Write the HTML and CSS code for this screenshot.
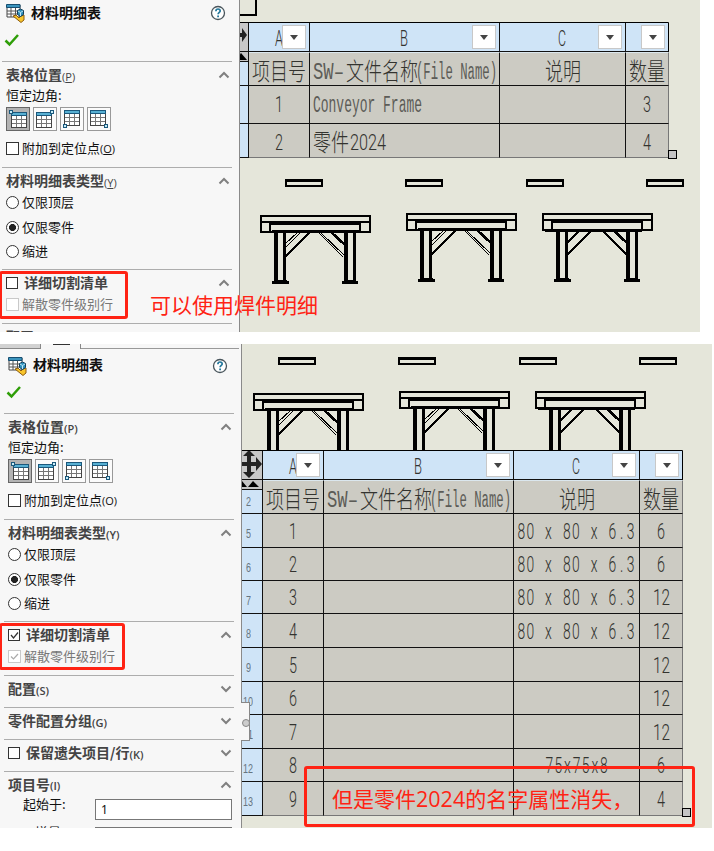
FILE: index.html
```html
<!DOCTYPE html>
<html lang="zh-CN">
<head>
<meta charset="utf-8">
<title>材料明细表</title>
<link rel="stylesheet" href="styles.css">
</head>
<body>
<svg class="defs" width="0" height="0">
  <symbol id="bom" viewBox="0 0 20 20">
    <path d="M1 2h13v12H1z" fill="#fff" stroke="#444"/><path d="M0.5 1.500h13.500v3H.5z" fill="#3b94bd" stroke="#174e70"/>
    <path d="M5 5v9M9.500 5v9M1 8h13M1 11h13" stroke="#555" fill="none"/>
    <path d="M7 13l3-1 3 3 2-2 3-1v5l-3 2.500z" fill="#f8c52c" stroke="#8c5b10"/>
    <path d="M11.500 7.500l3-1.500 3 1.500v4l-3 2-3-2z" fill="#2f91bd" stroke="#123f5a"/><path d="M12 8l2.500 1.500 2.500-1.500M14.500 9.500v3.500" stroke="#bfe6f5" fill="none"/>
  </symbol>
  <symbol id="help" viewBox="0 0 16 16"><circle cx="8" cy="8" r="6.500" fill="#fff" stroke="#49555c" stroke-width="1.300"/><path d="M5.900 6.200c0-3 4.300-2.800 4.300-.3 0 1.500-2.100 1.500-2.100 3.400" fill="none" stroke="#24789c" stroke-width="1.700"/><path d="M7.200 10.600h1.800v1.700H7.200z" fill="#24789c"/></symbol>
  <symbol id="ok" viewBox="0 0 16 14"><path d="M1.500 7.500l4 4L14 2" fill="none" stroke="#2f9e08" stroke-width="2.500"/></symbol>
  <symbol id="up" viewBox="0 0 12 8"><path d="M1.500 6.500L6 2l4.500 4.500" fill="none" stroke="#808080" stroke-width="2"/></symbol>
  <symbol id="down" viewBox="0 0 12 8"><path d="M1.500 1.500L6 6l4.500-4.500" fill="none" stroke="#808080" stroke-width="2"/></symbol>
  <symbol id="grid" viewBox="0 0 16 16"><path d="M.5.500h15v15H.5z" fill="#fff" stroke="#444"/><path d="M.5.500h15v3H.5z" fill="#58b0d3" stroke="#1b587c"/><path d="M5.500 4v11M10.500 4v11M1 7.500h14M1 11.500h14" stroke="#777" fill="none"/></symbol>
  <symbol id="pin" viewBox="0 0 4 4"><path d="M.5.500h3v3h-3z" fill="#c5ecf8" stroke="#1b587c"/></symbol>
  <symbol id="bar" viewBox="0 0 40 10"><path d="M2 2v6h36V2z" fill="none" stroke="#000" stroke-width="2"/><path d="M2 2.500h36" stroke="#000" stroke-width="3"/></symbol>
  <symbol id="bench" viewBox="0 0 112 72">
    <g fill="none" stroke="#000" stroke-width="2">
      <path d="M1 1h109v16H1zM1 7h109M10 8v9M100 8v9"/><path d="M10 8h91" stroke-width="4"/><path d="M12 16.500h88" stroke-width="3"/>
      <path d="M16 18v47M86 18v47" stroke-width="4"/><path d="M24.500 18v47M94.500 18v47" stroke-width="3"/>
      <path d="M12 67h17M82 67h16" stroke-width="3"/><path d="M14 65.500h13M84 65.500h12" stroke-width="2"/>
      <path d="M25 42L50 17M71 17l14 13" stroke-width="2.500"/><path d="M25 29l13-12M26 32l14-14M60 17l25 24M58 17l25 25" stroke-width="1"/>
    </g>
  </symbol>
  <symbol id="bench-b" viewBox="0 0 112 72">
    <g fill="none" stroke="#000" stroke-width="2">
      <path d="M1 1h109v16H1zM1 7h109M10 8v9M100 8v9"/><path d="M10 8h91" stroke-width="4"/><path d="M3 17h97" stroke-width="3"/>
      <path d="M16 18v47M86 18v47" stroke-width="4"/><path d="M24.500 18v47M94.500 18v47" stroke-width="3"/>
      <path d="M12 67h17M82 67h16" stroke-width="3"/><path d="M14 65.500h13M84 65.500h12"/>
      <path d="M25 42L50 17M25 30l13-13M60 17l25 25M71 17l14 13" stroke-width="2.500"/>
    </g>
  </symbol>
</svg>

<section class="shot first">
  <aside class="panel">
    <div class="title"><svg class="bom"><use href="#bom"/></svg><b>材料明细表</b><svg class="help"><use href="#help"/></svg></div>
    <div class="confirm"><svg class="ok"><use href="#ok"/></svg></div>
    <div class="group location">
      <div class="head"><b>表格位置</b><small>(<u>P</u>)</small><svg class="chev"><use href="#up"/></svg></div>
      <div class="label">恒定边角:</div>
      <div class="corners">
        <span class="on"><svg><use href="#grid" x="5" y="5" width="16" height="16"/><use href="#pin" x="3" y="3" width="4" height="4"/></svg></span>
        <span><svg><use href="#grid" x="3" y="5" width="16" height="16"/><use href="#pin" x="17" y="3" width="4" height="4"/></svg></span>
        <span><svg><use href="#grid" x="4" y="3" width="16" height="16"/><use href="#pin" x="3" y="17" width="4" height="4"/></svg></span>
        <span><svg><use href="#grid" x="3" y="3" width="16" height="16"/><use href="#pin" x="17" y="17" width="4" height="4"/></svg></span>
      </div>
      <div class="opt anchor"><i class="box"></i>附加到定位点<small>(<u>O</u>)</small></div>
    </div>
    <div class="group types">
      <div class="head"><b>材料明细表类型</b><small>(<u>Y</u>)</small><svg class="chev"><use href="#up"/></svg></div>
      <div class="opt"><i class="radio"></i>仅限顶层</div>
      <div class="opt"><i class="radio sel"></i>仅限零件</div>
      <div class="opt"><i class="radio"></i>缩进</div>
    </div>
    <div class="group cut">
      <div class="head"><i class="box sm"></i><b>详细切割清单</b><svg class="chev"><use href="#up"/></svg></div>
      <div class="opt off"><i class="box"></i>解散零件级别行</div>
    </div>
    <div class="group"><div class="head"><b>配置</b></div></div>
  </aside>
  <main class="canvas">
    <svg class="drawing" viewBox="240 0 460 332">
      <path d="M240 15h16V0" fill="none" stroke="#000" stroke-width="2"/>
      <use href="#bar" x="284" y="178" width="40" height="10"/><use href="#bar" x="404" y="178" width="40" height="10"/><use href="#bar" x="525" y="178" width="40" height="10"/><use href="#bar" x="645" y="178" width="40" height="10"/>
      <use href="#bench" x="260" y="215" width="112" height="72"/><use href="#bench" x="406" y="213" width="112" height="72"/><use href="#bench-b" x="542" y="213" width="112" height="72"/>
    </svg>
    <div class="bom-table">
      <div class="row header"><div class="num grip"><svg><path d="M-6 10h8V5l5 7-5 7v-5h-8z"/></svg></div>
        <div class="cell"><svg width="8" height="28"><text y="22" textLength="8" lengthAdjust="spacingAndGlyphs">A</text></svg><i class="drop"></i></div>
        <div class="cell"><svg width="8" height="28"><text y="22" textLength="8" lengthAdjust="spacingAndGlyphs">B</text></svg><i class="drop"></i></div>
        <div class="cell"><svg width="8" height="28"><text y="22" textLength="8" lengthAdjust="spacingAndGlyphs">C</text></svg><i class="drop"></i></div>
        <div class="cell"><i class="drop"></i></div></div>
      <div class="row names"><div class="num"><span class="tri"><svg><path d="M-5 8L1 1l6 7z"/></svg></span></div>
        <div class="cell"><svg width="54" height="30"><text class="han" y="24" textLength="54" lengthAdjust="spacingAndGlyphs">项目号</text></svg></div>
        <div class="cell left"><svg width="186" height="30"><text class="mono" y="23" textLength="31" lengthAdjust="spacingAndGlyphs">SW–</text><text class="han" x="33" y="24" textLength="72" lengthAdjust="spacingAndGlyphs">文件名称</text><text class="mono" x="103" y="23" textLength="81" lengthAdjust="spacingAndGlyphs">(File Name)</text></svg></div>
        <div class="cell"><svg width="36" height="30"><text class="han" y="24" textLength="36" lengthAdjust="spacingAndGlyphs">说明</text></svg></div>
        <div class="cell"><svg width="36" height="30"><text class="han" y="24" textLength="36" lengthAdjust="spacingAndGlyphs">数量</text></svg></div></div>
      <div class="row r38"><div class="num"></div>
        <div class="cell"><svg width="8" height="28"><text y="22" textLength="8" lengthAdjust="spacingAndGlyphs">1</text></svg></div>
        <div class="cell left"><svg width="110" height="28"><text class="mono" y="22" textLength="109" lengthAdjust="spacingAndGlyphs">Conveyor Frame</text></svg></div>
        <div class="cell"></div>
        <div class="cell"><svg width="8" height="28"><text y="22" textLength="8" lengthAdjust="spacingAndGlyphs">3</text></svg></div></div>
      <div class="row r34"><div class="num"></div>
        <div class="cell"><svg width="8" height="28"><text y="22" textLength="8" lengthAdjust="spacingAndGlyphs">2</text></svg></div>
        <div class="cell left"><svg width="74" height="30"><text class="han" y="24" textLength="36" lengthAdjust="spacingAndGlyphs">零件</text><text x="37" y="23" textLength="36" lengthAdjust="spacingAndGlyphs">2024</text></svg></div>
        <div class="cell"></div>
        <div class="cell"><svg width="8" height="28"><text y="22" textLength="8" lengthAdjust="spacingAndGlyphs">4</text></svg></div></div>
      <i class="resize"></i>
    </div>
  </main>
  <div class="mark cut-a"></div>
  <p class="note note-a">可以使用焊件明细</p>
</section>

<section class="shot second">
  <aside class="panel">
    <div class="tabs"><i class="tab"></i><i class="tab active"></i><i class="rest"></i></div>
    <div class="title"><svg class="bom"><use href="#bom"/></svg><b>材料明细表</b><svg class="help"><use href="#help"/></svg></div>
    <div class="confirm"><svg class="ok"><use href="#ok"/></svg></div>
    <div class="group location">
      <div class="head"><b>表格位置</b><small>(P)</small><svg class="chev"><use href="#up"/></svg></div>
      <div class="label">恒定边角:</div>
      <div class="corners">
        <span class="on"><svg><use href="#grid" x="5" y="5" width="16" height="16"/><use href="#pin" x="3" y="3" width="4" height="4"/></svg></span>
        <span><svg><use href="#grid" x="3" y="5" width="16" height="16"/><use href="#pin" x="17" y="3" width="4" height="4"/></svg></span>
        <span><svg><use href="#grid" x="4" y="3" width="16" height="16"/><use href="#pin" x="3" y="17" width="4" height="4"/></svg></span>
        <span><svg><use href="#grid" x="3" y="3" width="16" height="16"/><use href="#pin" x="17" y="17" width="4" height="4"/></svg></span>
      </div>
      <div class="opt anchor"><i class="box"></i>附加到定位点<small>(O)</small></div>
    </div>
    <div class="group types">
      <div class="head"><b>材料明细表类型</b><small>(Y)</small><svg class="chev"><use href="#up"/></svg></div>
      <div class="opt"><i class="radio"></i>仅限顶层</div>
      <div class="opt"><i class="radio sel"></i>仅限零件</div>
      <div class="opt"><i class="radio"></i>缩进</div>
    </div>
    <div class="group cut">
      <div class="head"><i class="box sm"><svg><path d="M2 5l2.500 3L9 2.500"/></svg></i><b>详细切割清单</b><svg class="chev"><use href="#up"/></svg></div>
      <div class="opt off"><i class="box"><svg><path d="M2 5.500L4.500 8 9 3"/></svg></i>解散零件级别行</div>
    </div>
    <div class="group fold"><div class="head"><b>配置</b><small>(S)</small><svg class="chev"><use href="#down"/></svg></div></div>
    <div class="group fold"><div class="head"><b>零件配置分组</b><small>(G)</small><svg class="chev"><use href="#down"/></svg></div></div>
    <div class="group fold"><div class="head"><i class="box sm"></i><b>保留遗失项目/行</b><small>(K)</small><svg class="chev"><use href="#down"/></svg></div></div>
    <div class="group items">
      <div class="head"><b>项目号</b><small>(I)</small><svg class="chev"><use href="#up"/></svg></div>
      <div class="field"><span>起始于:</span><div class="input">1</div></div>
      <div class="field next"><span>增量:</span><div class="input"></div></div>
    </div>
  </aside>
  <main class="canvas">
    <svg class="drawing" viewBox="242 344 470 484">
      <use href="#bar" x="277" y="356" width="40" height="10"/><use href="#bar" x="397" y="356" width="40" height="10"/><use href="#bar" x="518" y="356" width="40" height="10"/><use href="#bar" x="638" y="356" width="40" height="10"/>
      <use href="#bench" x="253" y="393" width="112" height="72"/><use href="#bench" x="399" y="391" width="112" height="72"/><use href="#bench-b" x="535" y="391" width="112" height="72"/>
    </svg>
    <div class="bom-table">
      <div class="row header"><div class="num grip"><svg><path d="M-1 11h6V5H1l6-6 6 6H9v6h5V6l6 7-6 7v-5H9v6h4l-6 6-6-6h4v-6h-6z"/></svg></div>
        <div class="cell"><svg width="8" height="28"><text y="22" textLength="8" lengthAdjust="spacingAndGlyphs">A</text></svg><i class="drop"></i></div>
        <div class="cell"><svg width="8" height="28"><text y="22" textLength="8" lengthAdjust="spacingAndGlyphs">B</text></svg><i class="drop"></i></div>
        <div class="cell"><svg width="8" height="28"><text y="22" textLength="8" lengthAdjust="spacingAndGlyphs">C</text></svg><i class="drop"></i></div>
        <div class="cell"><i class="drop"></i></div></div>
      <div class="row names"><div class="num"><span class="tri"><svg><path d="M-5 7L0 1l5 6zM6 7l5-6 6 6z"/></svg></span><svg class="n" width="5" height="14"><text y="12" textLength="5" lengthAdjust="spacingAndGlyphs">2</text></svg></div>
        <div class="cell"><svg width="54" height="30"><text class="han" y="24" textLength="54" lengthAdjust="spacingAndGlyphs">项目号</text></svg></div>
        <div class="cell left"><svg width="186" height="30"><text class="mono" y="23" textLength="31" lengthAdjust="spacingAndGlyphs">SW–</text><text class="han" x="33" y="24" textLength="72" lengthAdjust="spacingAndGlyphs">文件名称</text><text class="mono" x="103" y="23" textLength="81" lengthAdjust="spacingAndGlyphs">(File Name)</text></svg></div>
        <div class="cell"><svg width="36" height="30"><text class="han" y="24" textLength="36" lengthAdjust="spacingAndGlyphs">说明</text></svg></div>
        <div class="cell"><svg width="36" height="30"><text class="han" y="24" textLength="36" lengthAdjust="spacingAndGlyphs">数量</text></svg></div></div>
      <div class="row r34"><div class="num"><svg class="n" width="5" height="14"><text y="12" textLength="5" lengthAdjust="spacingAndGlyphs">5</text></svg></div><div class="cell"><svg width="8" height="28"><text y="22" textLength="8" lengthAdjust="spacingAndGlyphs">1</text></svg></div><div class="cell"></div><div class="cell"><svg width="120" height="28"><text class="spread" y="22" x="7 21 35.500 50 64.500 79 93.500 108 122.500 137 151.500 166 180.500">80 x 80 x 6.3</text></svg></div><div class="cell"><svg width="8" height="28"><text y="22" textLength="8" lengthAdjust="spacingAndGlyphs">6</text></svg></div></div>
      <div class="row"><div class="num"><svg class="n" width="5" height="14"><text y="12" textLength="5" lengthAdjust="spacingAndGlyphs">6</text></svg></div><div class="cell"><svg width="8" height="28"><text y="22" textLength="8" lengthAdjust="spacingAndGlyphs">2</text></svg></div><div class="cell"></div><div class="cell"><svg width="120" height="28"><text class="spread" y="22" x="7 21 35.500 50 64.500 79 93.500 108 122.500 137 151.500 166 180.500">80 x 80 x 6.3</text></svg></div><div class="cell"><svg width="8" height="28"><text y="22" textLength="8" lengthAdjust="spacingAndGlyphs">6</text></svg></div></div>
      <div class="row"><div class="num"><svg class="n" width="5" height="14"><text y="12" textLength="5" lengthAdjust="spacingAndGlyphs">7</text></svg></div><div class="cell"><svg width="8" height="28"><text y="22" textLength="8" lengthAdjust="spacingAndGlyphs">3</text></svg></div><div class="cell"></div><div class="cell"><svg width="120" height="28"><text class="spread" y="22" x="7 21 35.500 50 64.500 79 93.500 108 122.500 137 151.500 166 180.500">80 x 80 x 6.3</text></svg></div><div class="cell"><svg width="17" height="28"><text y="22" textLength="17" lengthAdjust="spacingAndGlyphs">12</text></svg></div></div>
      <div class="row r34"><div class="num"><svg class="n" width="5" height="14"><text y="12" textLength="5" lengthAdjust="spacingAndGlyphs">8</text></svg></div><div class="cell"><svg width="8" height="28"><text y="22" textLength="8" lengthAdjust="spacingAndGlyphs">4</text></svg></div><div class="cell"></div><div class="cell"><svg width="120" height="28"><text class="spread" y="22" x="7 21 35.500 50 64.500 79 93.500 108 122.500 137 151.500 166 180.500">80 x 80 x 6.3</text></svg></div><div class="cell"><svg width="17" height="28"><text y="22" textLength="17" lengthAdjust="spacingAndGlyphs">12</text></svg></div></div>
      <div class="row r34"><div class="num"><svg class="n" width="5" height="14"><text y="12" textLength="5" lengthAdjust="spacingAndGlyphs">9</text></svg></div><div class="cell"><svg width="8" height="28"><text y="22" textLength="8" lengthAdjust="spacingAndGlyphs">5</text></svg></div><div class="cell"></div><div class="cell"></div><div class="cell"><svg width="17" height="28"><text y="22" textLength="17" lengthAdjust="spacingAndGlyphs">12</text></svg></div></div>
      <div class="row"><div class="num"><svg class="n" width="10" height="14"><text y="12" textLength="10" lengthAdjust="spacingAndGlyphs">10</text></svg></div><div class="cell"><svg width="8" height="28"><text y="22" textLength="8" lengthAdjust="spacingAndGlyphs">6</text></svg></div><div class="cell"></div><div class="cell"></div><div class="cell"><svg width="17" height="28"><text y="22" textLength="17" lengthAdjust="spacingAndGlyphs">12</text></svg></div></div>
      <div class="row r34"><div class="num"><svg class="n" width="10" height="14"><text y="12" textLength="10" lengthAdjust="spacingAndGlyphs">11</text></svg></div><div class="cell"><svg width="8" height="28"><text y="22" textLength="8" lengthAdjust="spacingAndGlyphs">7</text></svg></div><div class="cell"></div><div class="cell"></div><div class="cell"><svg width="17" height="28"><text y="22" textLength="17" lengthAdjust="spacingAndGlyphs">12</text></svg></div></div>
      <div class="row"><div class="num"><svg class="n" width="10" height="14"><text y="12" textLength="10" lengthAdjust="spacingAndGlyphs">12</text></svg></div><div class="cell"><svg width="8" height="28"><text y="22" textLength="8" lengthAdjust="spacingAndGlyphs">8</text></svg></div><div class="cell"></div><div class="cell"><svg width="63" height="28"><text class="spread" y="22" x="7 21 35.500 50 64.500 79 93.500">75x75x8</text></svg></div><div class="cell"><svg width="8" height="28"><text y="22" textLength="8" lengthAdjust="spacingAndGlyphs">6</text></svg></div></div>
      <div class="row r34"><div class="num"><svg class="n" width="10" height="14"><text y="12" textLength="10" lengthAdjust="spacingAndGlyphs">13</text></svg></div><div class="cell"><svg width="8" height="28"><text y="22" textLength="8" lengthAdjust="spacingAndGlyphs">9</text></svg></div><div class="cell"></div><div class="cell"></div><div class="cell"><svg width="8" height="28"><text y="22" textLength="8" lengthAdjust="spacingAndGlyphs">4</text></svg></div></div>
      <i class="resize"></i>
    </div>
  </main>
  <i class="handle"></i>
  <div class="mark cut-b"></div>
  <div class="mark row-mark"></div>
  <p class="note note-b">但是零件<span>2024</span>的名字属性消失，</p>
</section>
</body>
</html>
```
FILE: styles.css
```css
* { box-sizing: border-box; }
body { margin: 0; background: #fff; color: #111; font: 13px/18px "Noto Sans CJK SC", sans-serif; }
i { font-style: normal; display: block; flex: none; }
svg { display: block; flex: none; }
.defs { position: absolute; }
.shot { display: flex; position: relative; overflow: hidden; }
.first { width: 700px; height: 332px; }
.second { width: 712px; height: 484px; margin-top: 12px; }

/* property panel */
.panel { flex: none; width: 240px; background: #f7f7f7; border-right: 1px solid #8a8a8a; padding-left: 2px; overflow: hidden; }
.second .panel { width: 242px; padding-left: 4px; }
.title { display: flex; align-items: center; height: 26px; width: 230px; padding-left: 4px; font-size: 14px; }
.title b { margin: -3px 0 0 5px; }
.bom { width: 20px; height: 20px; }
.help { width: 16px; height: 16px; margin: 0 6px 0 auto; }
.confirm { height: 35px; padding: 7px 0 0 2px; }
.ok { width: 16px; height: 14px; }
.tabs { display: flex; height: 5px; margin: 0 0 4px -4px; }
.tab { width: 41px; border: solid #888; border-width: 0 1px 1px 0; background: #d2d2d2; }
.tab.active { width: 40px; background: linear-gradient(#333, #333) 12px 0 / 17px 1px no-repeat; border-bottom: 0; }
.rest { width: 158px; border-bottom: 1px solid #999; }
.second .title { height: 25px; }
.group { width: 230px; border-top: 1px solid #adadad; padding-left: 4px; }
.location { height: 106px; }
.types { height: 102px; }
.cut { height: 54px; }
.fold { height: 32px; }
.head { display: flex; align-items: center; height: 28px; color: #444; font-size: 14px; }
.head b { margin-top: -4px; }
.head small, .opt small { font: 11px/14px "Open Sans", sans-serif; padding-top: 1px; }
.head small { font-weight: 600; }
.first .head small { font-weight: 400; }
.chev { width: 12px; height: 8px; margin: -2px 2px 0 auto; }
.label { height: 17px; line-height: 10px; }
.corners { display: flex; gap: 3px; }
.corners span { width: 24px; height: 24px; border: 1px solid #999; background: #fbfbfb; }
.corners svg { width: 24px; height: 24px; margin: -1px; shape-rendering: crispEdges; }
.corners .on { background: #b3b3b3; border-color: #666; }
.opt { display: flex; align-items: center; height: 24px; }
.anchor { margin-top: 5px; }
.types .opt:nth-child(2) { height: 14px; margin-top: -1px; }
.types .opt:nth-child(3) { margin-top: 6px; }
.box { width: 13px; height: 13px; border: 1px solid #333; background: #fff; margin-right: 3px; }
.box.sm { width: 12px; height: 12px; margin: -2px 6px 0 0; }
.box svg { width: 11px; height: 11px; fill: none; stroke: #333; stroke-width: 1.2; }
.off { color: #777; height: 14px; margin-top: -1px; }
.off .box { border-color: #c9c9c9; }
.off .box svg { stroke: #aaa; }
.radio { width: 13px; height: 13px; border: 1px solid #333; border-radius: 50%; background: #fff; margin-right: 3px; }
.sel { background: radial-gradient(circle, #222 0 3.2px, #fff 3.8px); }
.items .head { height: 27px; }
.field { display: flex; padding-left: 15px; }
.field span { width: 72px; margin-top: -4px; }
.input { width: 137px; height: 21px; border: 1px solid #777; background: #fff; padding-left: 5px; font: 12px/19px "Noto Sans", sans-serif; }
.next { margin-top: 7px; }
.next span { padding-left: 12px; margin-top: -4px; }

/* drawing sheet */
.canvas { flex: 1; position: relative; background: #e5e6da; padding-top: 22px; }
.second .canvas { padding-top: 106px; }
.drawing { position: absolute; left: 0; top: 0; width: 100%; height: 100%; shape-rendering: crispEdges; }

/* bill of materials */
.bom-table { position: relative; width: 429px; border-top: 1px solid #000; border-right: 1px solid #777; }
.second .bom-table { width: 441px; }
.row { display: grid; grid-template-columns: 9px 61px 190px 126px 43px; grid-template-rows: 100%; height: 33px; margin-right: -1px; }
.second .row { grid-template-columns: 21px 61px 190px 126px 43px; }
.row > * { border: solid #111; border-width: 0 1px 1px 0; }
.row > :last-child { border-right-color: #777; }
.row:nth-last-child(2) .cell { border-bottom-color: #777; }
.header { height: 29px; }
.header > :last-child { border-right-color: #000; }
.names, .row.r34 { height: 34px; }
.row.r38 { height: 38px; }
.cell { position: relative; display: flex; align-items: center; justify-content: center; background: #cccbc3; }
.cell svg { margin: -4px 0; overflow: visible; }
.first .cell { padding-bottom: 2px; }
.first .r34 .cell { padding: 2px 0 0; }
.header .cell, .first .header .cell { background: #cfe4f7; padding: 2px 1px 0 0; }
.names .cell, .first .names .cell { border-top: 1px solid #dbe7ee; padding: 3px 0 0; }
.row .cell.left { justify-content: flex-start; padding-left: 3px !important; }
.cell text { font: 300 22px Roboto, sans-serif; fill: #33332f; }
.cell .mono { font: 23.5px "Liberation Mono", monospace; fill: #5c5c57; }
.cell .spread { text-anchor: middle; transform: scaleX(.63); }
.cell .han { font: 300 24px "Noto Sans CJK SC", sans-serif; }
.num { position: relative; display: flex; align-items: center; justify-content: center; background: #cfe4f7; overflow: hidden; min-width: 0; }
.second .num { padding: 5px 8px 0 0; }
.second .names .num { padding-top: 9px; }
.n text { font: 13px "Liberation Sans", sans-serif; fill: #667580; }
.row .grip { background: #c8c8c8; padding: 0 !important; justify-content: flex-start; }
.grip svg { width: 20px; height: 28px; fill: #222; }
.tri { position: absolute; left: 0; top: 0; width: 100%; height: 10px; background: #c4c4c4; border-bottom: 1px solid #111; overflow: hidden; }
.tri svg { width: 20px; height: 9px; }
.drop { position: absolute; right: 3px; top: 2px; width: 24px; height: 24px; border: 1px solid #c8c8c8; background: #fff; }
.drop::after { content: ""; position: absolute; left: 7px; top: 9px; border: solid transparent; border-width: 5px 4.5px 0; border-top-color: #444; }
.resize { position: absolute; right: -9px; bottom: -1px; width: 9px; height: 9px; border: 1px solid #000; background: #c4c4c4; }
.handle { position: absolute; left: 241px; top: 358px; width: 9px; height: 39px; border: 1px solid #888; border-left: 0; background: #f7f7f7; }
.handle::after { content: ""; position: absolute; left: 1px; top: 16px; width: 6px; height: 6px; border: 1px solid #888; border-radius: 50%; background: #ccc; }

/* annotations */
.mark { position: absolute; border: 3px solid #ff2314; border-radius: 3px; }
.cut-a { left: -1px; top: 271px; width: 129px; height: 48px; }
.cut-b { left: -1px; top: 279px; width: 126px; height: 47px; }
.row-mark { left: 304px; top: 422px; width: 391px; height: 61px; }
.note { position: absolute; margin: 0; color: #ff2314; font-size: 21px; line-height: 30px; white-space: nowrap; }
.note span { font-family: "Open Sans", sans-serif; font-size: 21.5px; }
.note-a { left: 150px; top: 289px; }
.note-b { left: 332px; top: 439px; }
```
